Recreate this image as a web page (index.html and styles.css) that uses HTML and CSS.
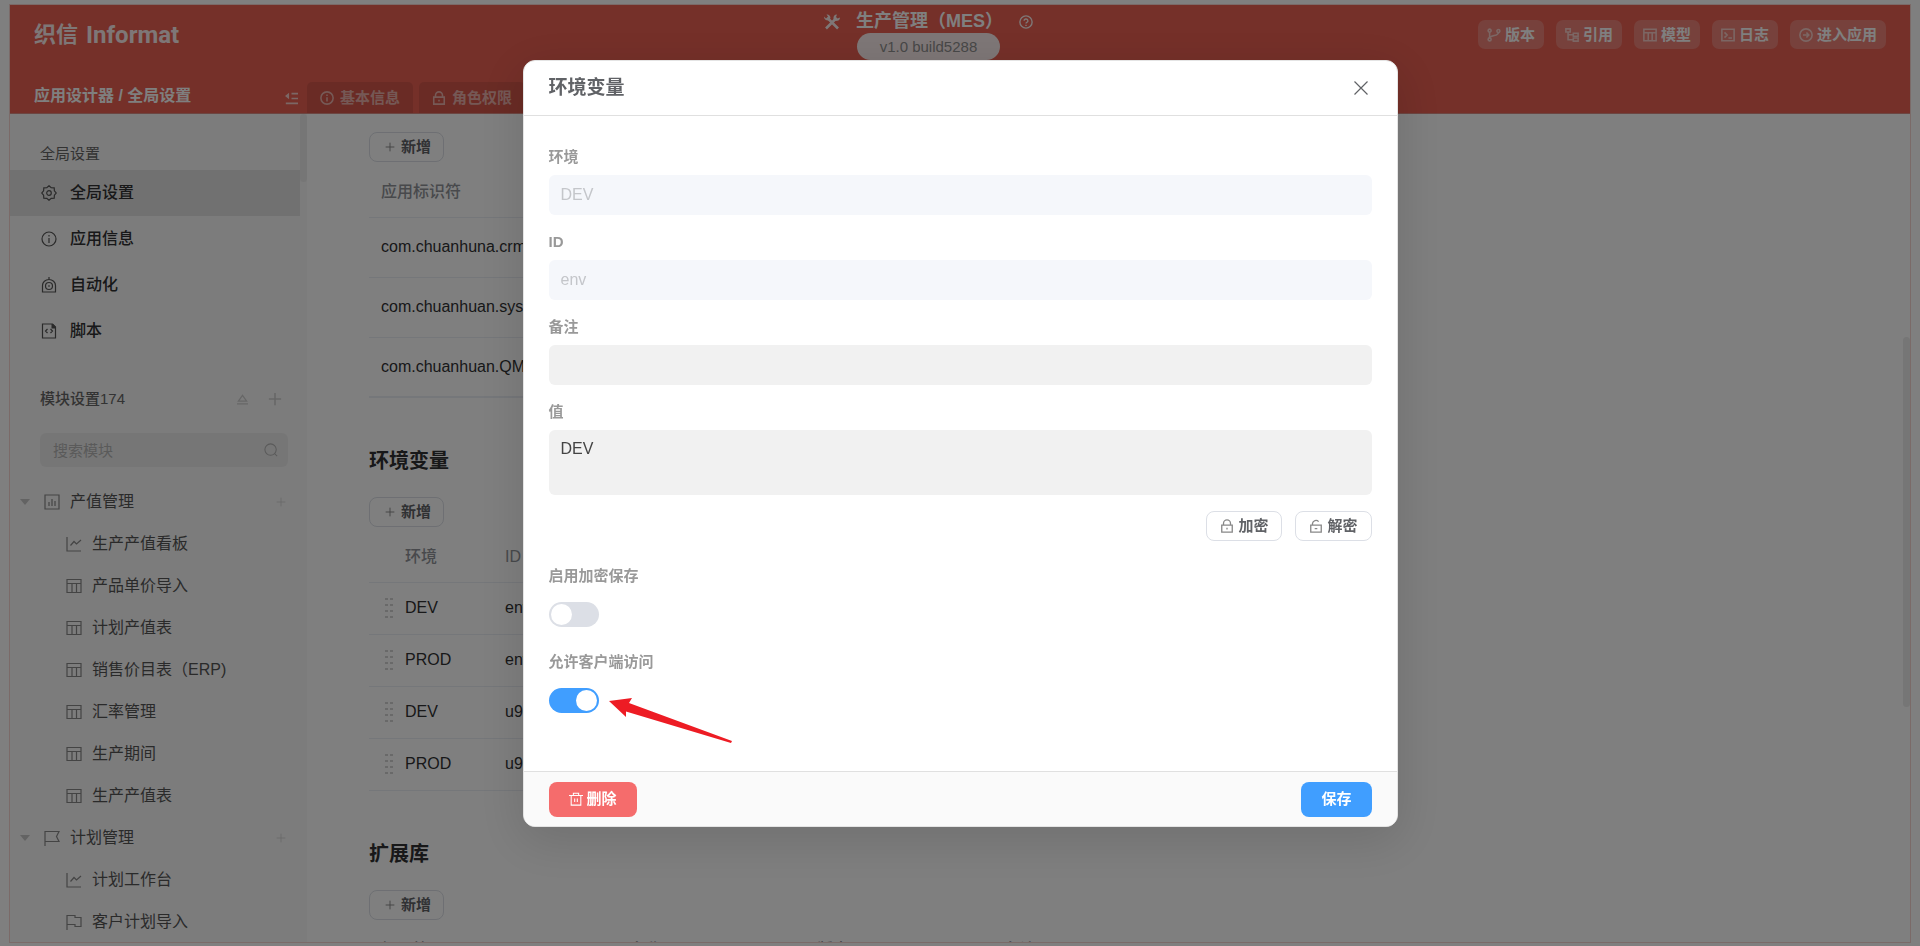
FILE: index.html
```html
<!DOCTYPE html>
<html lang="zh-CN">
<head>
    <meta charset="UTF-8">
    <meta name="viewport" content="width=device-width, initial-scale=1.0">
    <title>应用设计器 - 环境变量</title>
    <link rel="stylesheet" href="styles.css">
</head>
<body>

<!-- icons -->
<svg class="sprite" aria-hidden="true">
    <symbol id="i-plus" viewBox="0 0 16 16"><path d="M8 1v14M1 8h14"/></symbol>
    <symbol id="i-info" viewBox="0 0 16 16"><circle cx="8" cy="8" r="7"/><path d="M8 7v5M8 4v1.6"/></symbol>
    <symbol id="i-lock" viewBox="0 0 16 16"><path d="M2 7h12v8H2zM4 7V5a4 4 0 0 1 8 0v2M8 10v2"/></symbol>
    <symbol id="i-unlock" viewBox="0 0 16 16"><path d="M2 7h12v8H2zM4 7V5a4 4 0 0 1 7-2M6.500 11h3"/></symbol>
    <symbol id="i-gear" viewBox="0 0 16 16"><path d="M8 .7 10.200 2.600 13.200 2.800 13.400 5.800 15.300 8 13.400 10.200 13.200 13.200 10.200 13.400 8 15.300 5.800 13.400 2.800 13.200 2.600 10.200 .7 8 2.600 5.800 2.800 2.800 5.800 2.600z"/><circle cx="8" cy="8" r="2.300"/></symbol>
    <symbol id="i-robot" viewBox="0 0 16 16"><path d="M1.500 15V8.500a6.500 6 0 0 1 13 0V15zM8 0v2.500"/><circle cx="8" cy="9" r="3.500"/><path d="M7 9h2"/></symbol>
    <symbol id="i-script" viewBox="0 0 16 16"><path d="M1.500 1h10l3 3v11h-13zM6.500 6 4.500 8l2 2M9.500 6l2 2-2 2"/><path class="fill" d="M10.500 1h1.500l3 3v1.500h-4.500z"/></symbol>
    <symbol id="i-chart" viewBox="0 0 16 16"><path d="M1 1h14v14H1zM5 8v4M8 5v7M11 7v5"/></symbol>
    <symbol id="i-line" viewBox="0 0 16 16"><path d="M1 1v14h14M4.500 9.500l3.500-4 2.500 2.500L15 4"/></symbol>
    <symbol id="i-table" viewBox="0 0 16 16"><path d="M1 1.500h14v13H1zM1 5.500h14M6 5.500v9M10.500 5.500v9"/></symbol>
    <symbol id="i-flag" viewBox="0 0 16 16"><path d="M1 16V1.500h14l-2.500 5 2.500 5H1"/></symbol>
    <symbol id="i-banner" viewBox="0 0 16 16"><path d="M1 16V1.500h8v2h6v9H9v-2H1"/></symbol>
    <symbol id="i-search" viewBox="0 0 16 16"><circle cx="7.500" cy="7.500" r="6.500"/><path d="m12 12 3 3"/></symbol>
    <symbol id="i-collapse" viewBox="0 0 16 16"><path d="M1 14h15M8 2h8M8 8h8"/><path class="fill" d="M5 1v8L0 5z"/></symbol>
    <symbol id="i-sort" viewBox="0 0 16 16"><path d="M8 2l6 8.500H2zM0 14.500h16"/></symbol>
    <symbol id="i-tools" viewBox="0 0 16 16"><path d="M2 14.500 12 4.500M14 14.500 4 4.500" stroke-width="2.600"/><path class="fill" d="M0 2.500 2 4.500 4 2.500 2.500.5Q6 0 6.500 4L4.500 6.500Q0 6.500 0 2.500zM16 3.500 13.500 4.500 12 3 13 .5Q9 .5 9.500 5L11.500 7Q16 7 16 3.500z"/></symbol>
    <symbol id="i-help" viewBox="0 0 16 16"><circle cx="8" cy="8" r="7"/><path d="M5.800 6.500a2.200 2 0 1 1 3.200 1.800q-1 .5-1 1.500M8 11v1.500"/></symbol>
    <symbol id="i-branch" viewBox="0 0 16 16"><circle cx="3" cy="3" r="1.700"/><circle cx="3" cy="13" r="1.700"/><circle cx="13" cy="3.500" r="1.700"/><path d="M3 5v6M13 5c0 4-6 3-9.500 5.500"/></symbol>
    <symbol id="i-tree" viewBox="0 0 16 16"><path d="M1 1h5v3.500H1zM9.500 6H15v3.500H9.500zM9.500 11.500H15V15H9.500zM3.500 4.500v9h6M3.500 7.700h6"/></symbol>
    <symbol id="i-terminal" viewBox="0 0 16 16"><path d="M1 1.500h14v13H1zM4 5l3 3-3 3M8.500 11.500h4"/></symbol>
    <symbol id="i-enter" viewBox="0 0 16 16"><circle cx="8" cy="8" r="7"/><path d="M4.500 8h6.500M8.500 5.200 11.200 8l-2.700 2.800"/></symbol>
    <symbol id="i-trash" viewBox="0 0 16 16"><path d="M0 4h16M2.500 4v11h11V4M5 4V1.500h6V4M6.500 7.500v4M9.500 7.500v4"/></symbol>
    <symbol id="i-close" viewBox="0 0 16 16"><path d="m1.500 1.500 13 13M14.500 1.500l-13 13"/></symbol>
    <symbol id="i-drag" viewBox="0 0 8 20"><path class="fill" d="M0 0h3v2H0zM5 0h3v2H5zM0 6h3v2H0zM5 6h3v2H5zM0 12h3v2H0zM5 12h3v2H5zM0 18h3v2H0zM5 18h3v2H5z"/></symbol>
</svg>

<div class="app">
    <header class="header">
        <div class="header-top">
            <div class="logo"><span class="logo-cn">织信</span><span class="logo-en">Informat</span></div>
            <div class="app-title">
                <div class="app-name">
                    <svg class="icon icon-16"><use href="#i-tools"/></svg>
                    <h1>生产管理（MES）</h1>
                    <svg class="icon icon-14"><use href="#i-help"/></svg>
                </div>
                <span class="version">v1.0 build5288</span>
            </div>
            <div class="header-actions">
                <button type="button"><svg class="icon icon-14"><use href="#i-branch"/></svg>版本</button>
                <button type="button"><svg class="icon icon-14"><use href="#i-tree"/></svg>引用</button>
                <button type="button"><svg class="icon icon-14"><use href="#i-table"/></svg>模型</button>
                <button type="button"><svg class="icon icon-14"><use href="#i-terminal"/></svg>日志</button>
                <button type="button"><svg class="icon icon-14"><use href="#i-enter"/></svg>进入应用</button>
            </div>
        </div>
        <div class="header-bottom">
            <div class="breadcrumb">
                <span>应用设计器 / 全局设置</span>
                <button type="button" class="bare" aria-label="收起"><svg class="icon icon-13"><use href="#i-collapse"/></svg></button>
            </div>
            <nav class="tabs">
                <a href="#"><svg class="icon icon-14"><use href="#i-info"/></svg>基本信息</a>
                <a href="#"><svg class="icon icon-14"><use href="#i-lock"/></svg>角色权限</a>
            </nav>
        </div>
    </header>

    <div class="workspace">
        <aside class="sidebar">
            <p class="side-label">全局设置</p>
            <nav class="menu">
                <a href="#" class="active"><svg class="icon icon-16"><use href="#i-gear"/></svg>全局设置</a>
                <a href="#"><svg class="icon icon-16"><use href="#i-info"/></svg>应用信息</a>
                <a href="#"><svg class="icon icon-16"><use href="#i-robot"/></svg>自动化</a>
                <a href="#"><svg class="icon icon-16"><use href="#i-script"/></svg>脚本</a>
            </nav>
            <div class="module-head">
                <span>模块设置174</span>
                <button type="button" class="bare" aria-label="排序"><svg class="icon icon-11"><use href="#i-sort"/></svg></button>
                <button type="button" class="bare" aria-label="新增模块"><svg class="icon icon-14"><use href="#i-plus"/></svg></button>
            </div>
            <label class="search">
                <input type="text" placeholder="搜索模块" aria-label="搜索模块">
                <svg class="icon icon-14"><use href="#i-search"/></svg>
            </label>
            <nav class="tree">
                <div class="group">
                    <span class="caret"></span>
                    <a href="#"><svg class="icon icon-16"><use href="#i-chart"/></svg>产值管理</a>
                    <button type="button" class="bare" aria-label="新增"><svg class="icon icon-10"><use href="#i-plus"/></svg></button>
                </div>
                <a class="leaf" href="#"><svg class="icon icon-16"><use href="#i-line"/></svg>生产产值看板</a>
                <a class="leaf" href="#"><svg class="icon icon-16"><use href="#i-table"/></svg>产品单价导入</a>
                <a class="leaf" href="#"><svg class="icon icon-16"><use href="#i-table"/></svg>计划产值表</a>
                <a class="leaf" href="#"><svg class="icon icon-16"><use href="#i-table"/></svg>销售价目表（ERP)</a>
                <a class="leaf" href="#"><svg class="icon icon-16"><use href="#i-table"/></svg>汇率管理</a>
                <a class="leaf" href="#"><svg class="icon icon-16"><use href="#i-table"/></svg>生产期间</a>
                <a class="leaf" href="#"><svg class="icon icon-16"><use href="#i-table"/></svg>生产产值表</a>
                <div class="group">
                    <span class="caret"></span>
                    <a href="#"><svg class="icon icon-16"><use href="#i-flag"/></svg>计划管理</a>
                    <button type="button" class="bare" aria-label="新增"><svg class="icon icon-10"><use href="#i-plus"/></svg></button>
                </div>
                <a class="leaf" href="#"><svg class="icon icon-16"><use href="#i-line"/></svg>计划工作台</a>
                <a class="leaf" href="#"><svg class="icon icon-16"><use href="#i-banner"/></svg>客户计划导入</a>
            </nav>
            <span class="side-thumb"></span>
        </aside>

        <main class="main">
            <section class="block">
                <button type="button" class="btn add"><svg class="icon icon-10"><use href="#i-plus"/></svg>新增</button>
                <table class="apps">
                    <thead><tr><th>应用标识符</th></tr></thead>
                    <tbody>
                        <tr><td>com.chuanhuna.crm</td></tr>
                        <tr><td>com.chuanhuan.sys</td></tr>
                        <tr><td>com.chuanhuan.QMS</td></tr>
                    </tbody>
                </table>
            </section>

            <section class="block">
                <h2>环境变量</h2>
                <button type="button" class="btn add"><svg class="icon icon-10"><use href="#i-plus"/></svg>新增</button>
                <table class="envs">
                    <thead><tr><th class="col-drag"></th><th class="col-env">环境</th><th>ID</th></tr></thead>
                    <tbody>
                        <tr><td><svg class="icon drag"><use href="#i-drag"/></svg></td><td>DEV</td><td>env</td></tr>
                        <tr><td><svg class="icon drag"><use href="#i-drag"/></svg></td><td>PROD</td><td>env</td></tr>
                        <tr><td><svg class="icon drag"><use href="#i-drag"/></svg></td><td>DEV</td><td>u9</td></tr>
                        <tr><td><svg class="icon drag"><use href="#i-drag"/></svg></td><td>PROD</td><td>u9</td></tr>
                    </tbody>
                </table>
            </section>

            <section class="block">
                <h2>扩展库</h2>
                <button type="button" class="btn add"><svg class="icon icon-10"><use href="#i-plus"/></svg>新增</button>
                <table class="libs">
                    <thead><tr><th class="col-lib">标识符</th><th class="col-mid">名称</th><th class="col-mid">版本</th><th>备注</th></tr></thead>
                </table>
            </section>
            <span class="main-thumb"></span>
        </main>
    </div>
</div>

<div class="overlay">
    <form class="dialog" role="dialog" aria-labelledby="dialog-title">
        <div class="dialog-head">
            <h2 id="dialog-title">环境变量</h2>
            <button type="button" class="bare" aria-label="关闭"><svg class="icon icon-16"><use href="#i-close"/></svg></button>
        </div>
        <div class="dialog-body">
            <div class="field">
                <label for="env">环境</label>
                <input type="text" id="env" value="DEV" disabled>
            </div>
            <div class="field">
                <label for="env-id">ID</label>
                <input type="text" id="env-id" value="env" disabled>
            </div>
            <div class="field">
                <label for="remark">备注</label>
                <input type="text" id="remark">
            </div>
            <div class="field">
                <label for="value">值</label>
                <textarea id="value">DEV</textarea>
            </div>
            <div class="crypt">
                <button type="button" class="btn"><svg class="icon icon-14"><use href="#i-lock"/></svg>加密</button>
                <button type="button" class="btn"><svg class="icon icon-14"><use href="#i-unlock"/></svg>解密</button>
            </div>
            <div class="field">
                <label for="encrypt">启用加密保存</label>
                <div class="switch-row"><input type="checkbox" class="switch" id="encrypt"></div>
            </div>
            <div class="field">
                <label for="client">允许客户端访问</label>
                <div class="switch-row">
                    <input type="checkbox" class="switch" id="client" checked>
                    <svg class="arrow" viewBox="0 0 123 45"><path d="M0 3 23 0 20 5 123 43 122 45 17 13.500V19z"/></svg>
                </div>
            </div>
        </div>
        <div class="dialog-foot">
            <button type="button" class="danger"><svg class="icon icon-14"><use href="#i-trash"/></svg>删除</button>
            <button type="submit" class="primary">保存</button>
        </div>
    </form>
</div>

</body>
</html>
```

FILE: styles.css
```css
* {
    box-sizing: border-box;
}
body {
    margin: 0;
    height: 100vh;
    padding: 4px 9px 3px;
    overflow: hidden;
    background-color: white;
    color: #303133;
    font-family: "Liberation Sans", "Noto Sans CJK SC", sans-serif;
    font-size: 16px;
    line-height: 22px;
}
h1, h2, p {
    margin: 0;
}
a {
    color: inherit;
    text-decoration: none;
}
button, input, textarea {
    font-family: inherit;
}
button {
    display: inline-flex;
    align-items: center;
    justify-content: center;
    gap: 4px;
    border: none;
    padding: 0 9px;
    font-size: 15px;
    font-weight: bold;
    line-height: 22px;
    cursor: pointer;
}
.bare {
    padding: 0;
    background: none;
    color: inherit;
}
.sprite {
    display: none;
}
.icon {
    flex: none;
    fill: none;
    stroke: currentColor;
    stroke-width: 1.2;
}
.fill {
    fill: currentColor;
    stroke: none;
}
.icon-10 {
    width: 10px;
    height: 10px;
}
.icon-11 {
    width: 11px;
    height: 11px;
}
.icon-13 {
    width: 13px;
    height: 13px;
    stroke-width: 2;
}
.icon-14 {
    width: 14px;
    height: 14px;
}
.icon-16 {
    width: 16px;
    height: 16px;
}

/* frame */
.app {
    display: flex;
    flex-direction: column;
    height: 100%;
    border: 1px solid #f6d5d1;
}
.header {
    display: flex;
    flex-direction: column;
    justify-content: space-between;
    height: 109px;
    border-bottom: 1px solid #d98c84;
    background-color: #ea6052;
    color: white;
}
.header-top {
    display: flex;
    justify-content: space-between;
    align-items: flex-start;
    padding: 5px 24px 0;
}
.logo {
    display: flex;
    align-items: center;
    gap: 8px;
    flex: 0 0 345px;
    padding-top: 9px;
    font-weight: bold;
    line-height: 32px;
    opacity: 0.9;
}
.logo-cn {
    font-size: 22px;
}
.logo-en {
    font-family: "Liberation Sans Narrow", Roboto, sans-serif;
    font-size: 24px;
}
.app-title {
    display: flex;
    flex-direction: column;
    align-items: center;
}
.app-name {
    display: flex;
    align-items: center;
    gap: 16px;
}
.app-name .icon {
    opacity: 0.9;
    stroke-width: 1.6;
}
.app-name h1 {
    font-size: 18px;
    line-height: 23px;
}
.version {
    padding: 2px 23px;
    border-radius: 14px;
    background-color: rgba(255, 255, 255, 0.9);
    color: #909090;
    font-size: 15px;
    line-height: 23px;
}
.header-actions {
    display: flex;
    gap: 12px;
    padding-top: 10px;
}
.header-actions button {
    height: 29px;
    border-radius: 7px;
    background-color: rgba(255, 255, 255, 0.22);
    color: white;
}
.header-actions .icon {
    opacity: 0.6;
    stroke-width: 1.8;
}
.header-bottom {
    display: flex;
    height: 31px;
}
.breadcrumb {
    display: flex;
    align-items: center;
    justify-content: space-between;
    width: 297px;
    padding: 0 9px 4px 24px;
    font-weight: bold;
}
.breadcrumb .bare {
    padding-top: 6px;
    opacity: 0.7;
}
.tabs {
    display: flex;
    gap: 6px;
}
.tabs a {
    display: flex;
    align-items: center;
    gap: 6px;
    padding: 0 13px;
    border-radius: 5px 5px 0 0;
    background-color: rgba(0, 0, 0, 0.09);
    color: rgba(255, 255, 255, 0.55);
    font-size: 15px;
    font-weight: bold;
}
.tabs .icon {
    stroke-width: 1.8;
}
.workspace {
    display: flex;
    flex: 1;
    min-height: 0;
}

/* sidebar */
.sidebar {
    position: relative;
    width: 297px;
    overflow: hidden;
    background-color: #f8f8f8;
}
.side-label {
    padding: 29px 30px 5px;
    color: #666;
    font-size: 15px;
}
.menu {
    margin-right: 7px;
}
.menu a {
    display: flex;
    align-items: center;
    gap: 13px;
    height: 46px;
    padding-left: 31px;
    font-weight: 500;
}
.menu .icon {
    color: #555;
}
.menu .active {
    background-color: #e2e2e2;
}
.module-head {
    display: flex;
    align-items: center;
    gap: 20px;
    padding: 34px 25px 23px 30px;
    color: #666;
    font-size: 15px;
    font-weight: 500;
}
.module-head span {
    flex: 1;
}
.module-head .bare {
    color: #cdcdcd;
}
.module-head .icon {
    stroke-width: 1.8;
}
.search {
    display: flex;
    align-items: center;
    height: 34px;
    margin: 0 19px 14px 30px;
    padding: 0 10px 0 13px;
    border-radius: 6px;
    background-color: #ededed;
    color: #b4b4b4;
}
.search input {
    flex: 1;
    min-width: 0;
    padding: 0;
    border: none;
    outline: none;
    background: none;
    font-size: 15px;
}
.search input::placeholder {
    color: #b4b4b4;
}
.group, .leaf {
    display: flex;
    align-items: center;
    height: 42px;
    color: #555;
}
.group {
    padding: 0 21px 0 10px;
}
.group a, .leaf {
    display: flex;
    align-items: center;
    gap: 10px;
    flex: 1;
}
.group .bare {
    color: #cdcdcd;
}
.leaf {
    padding-left: 56px;
}
.tree a .icon {
    color: #888;
}
.caret {
    margin-right: 14px;
    border: 5px solid transparent;
    border-top: 6px solid #c6c6c6;
    border-bottom: none;
}
.side-thumb, .main-thumb {
    position: absolute;
    right: 0;
    width: 7px;
    border-radius: 4px;
    background-color: #ececec;
}
.side-thumb {
    top: 0;
    height: 68px;
}

/* content */
.main {
    position: relative;
    flex: 1;
    overflow: hidden;
    padding: 18px 62px 0;
}
.block {
    max-width: 960px;
    margin-bottom: 50px;
}
.block h2 {
    margin-bottom: 23px;
    font-size: 20px;
    line-height: 26px;
}
.main-thumb {
    top: 223px;
    height: 370px;
}
.btn {
    height: 30px;
    padding: 0 13px;
    border: 1px solid #dcdfe6;
    border-radius: 8px;
    background-color: white;
    color: #606266;
}
.btn .icon {
    color: #888;
    stroke-width: 1.5;
}
.add {
    gap: 6px;
    padding: 0 12px 0 15px;
}
table {
    width: 100%;
    border-collapse: collapse;
    table-layout: fixed;
}
th, td {
    padding: 0 12px;
    border-bottom: 1px solid #ebeef5;
    text-align: left;
}
th {
    height: 55px;
    padding-top: 6px;
    color: #909399;
    font-weight: 500;
}
.apps {
    border-bottom: 2px solid #ebeef5;
}
.apps td {
    height: 60px;
}
.envs td {
    height: 52px;
}
.col-drag {
    width: 24px;
}
.col-env {
    width: 100px;
}
.drag {
    display: block;
    width: 8px;
    height: 20px;
    margin-left: 4px;
    color: #d2d2d2;
}
.col-lib {
    width: 249px;
}
.col-mid {
    width: 187px;
}

/* dialog */
.overlay {
    position: fixed;
    inset: 0;
    display: flex;
    justify-content: center;
    align-items: flex-start;
    padding-top: 60px;
    background-color: rgba(0, 0, 0, 0.5);
}
.dialog {
    width: 875px;
    max-width: 92%;
    overflow: hidden;
    border: 1px solid #e4e4e4;
    border-radius: 12px;
    background-color: white;
    box-shadow: 0 12px 48px 4px rgba(0, 0, 0, 0.12);
}
.dialog-head, .dialog-foot {
    display: flex;
    align-items: center;
    justify-content: space-between;
    height: 55px;
    padding: 0 25px;
}
.dialog-head {
    padding-right: 28px;
    border-bottom: 1px solid #e0e0e0;
    color: #606266;
}
.dialog-head h2 {
    font-size: 19px;
    line-height: 26px;
}
.dialog-body {
    padding: 30px 25px 34px;
}
.field {
    margin-bottom: 16px;
}
.field label {
    display: block;
    margin-bottom: 7px;
    color: #999;
    font-size: 15px;
    font-weight: bold;
}
.field input[type="text"], .field textarea {
    display: block;
    width: 100%;
    height: 40px;
    padding: 0 12px;
    border: none;
    border-radius: 6px;
    background-color: #f1f1f1;
    color: #444;
    font-size: 16px;
}
.field input[type="text"]:disabled {
    background-color: #f5f7fb;
    color: #c4c6ca;
}
.field textarea {
    height: 65px;
    padding-top: 8px;
    line-height: 22px;
    resize: none;
}
.crypt {
    display: flex;
    justify-content: flex-end;
    gap: 13px;
    margin-bottom: 24px;
}
.crypt ~ .field {
    margin-bottom: 17px;
}
.switch-row {
    position: relative;
    display: flex;
    align-items: center;
    height: 40px;
}
.switch {
    appearance: none;
    display: flex;
    width: 50px;
    height: 25px;
    margin: 0;
    padding: 2px;
    border-radius: 13px;
    background-color: #dcdfe6;
}
.switch::before {
    content: "";
    width: 21px;
    height: 21px;
    border-radius: 50%;
    background-color: white;
}
.switch:checked {
    justify-content: flex-end;
    background-color: #409eff;
}
.arrow {
    position: absolute;
    top: 18px;
    left: 60px;
    width: 123px;
    height: 45px;
    fill: #ed1c24;
}
.dialog-foot {
    border-top: 1px solid #e0e0e0;
    background-color: #fafafa;
}
.dialog-foot button {
    height: 35px;
    padding: 0 20px;
    border-radius: 8px;
    color: white;
}
.danger {
    background-color: #f56c6c;
}
.primary {
    background-color: #409eff;
}
```
